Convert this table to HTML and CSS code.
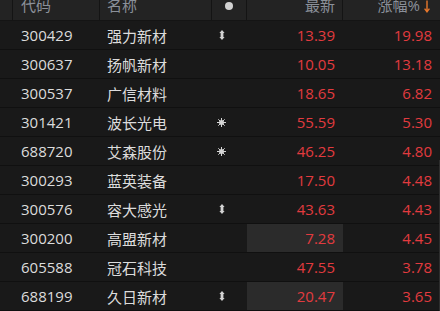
FILE: index.html
```html
<!DOCTYPE html>
<html lang="zh">
<head>
<meta charset="utf-8">
<link rel="stylesheet" href="styles.css">
</head>
<body>
<div class="board">
  <div class="row head">
    <div class="c c0"></div>
    <div class="c c1">代码</div>
    <div class="c c2">名称</div>
    <div class="c c3"><span class="dot"></span></div>
    <div class="c c4">最新</div>
    <div class="c c5">涨幅%<svg class="arr" width="6" height="13" viewBox="0 0 6 13"><path d="M3 0.5V11.5M0.6 8.6L3 11.8L5.4 8.6" fill="none" stroke="#e8782c" stroke-width="1.4"/></svg></div>
  </div>
  <div class="row"><div class="c c0"></div><div class="c c1">300429</div><div class="c c2">强力新材</div><div class="c c3"><svg class="ud" width="6" height="10" viewBox="0 0 6 10"><path d="M3 0L5.6 3H4.4V7H5.6L3 10L0.4 7H1.6V3H0.4Z" fill="#d2d2d2"/></svg></div><div class="c c4 up">13.39</div><div class="c c5 up">19.98</div></div>
  <div class="row"><div class="c c0"></div><div class="c c1">300637</div><div class="c c2">扬帆新材</div><div class="c c3"></div><div class="c c4 up">10.05</div><div class="c c5 up">13.18</div></div>
  <div class="row"><div class="c c0"></div><div class="c c1">300537</div><div class="c c2">广信材料</div><div class="c c3"></div><div class="c c4 up">18.65</div><div class="c c5 up">6.82</div></div>
  <div class="row"><div class="c c0"></div><div class="c c1">301421</div><div class="c c2">波长光电</div><div class="c c3"><svg class="sun" width="9" height="9" viewBox="0 0 9 9"><circle cx="4.5" cy="4.5" r="2.5" fill="#d6d6d6"/><path d="M4.5 0V9M0 4.5H9M1.3 1.3L7.7 7.7M7.7 1.3L1.3 7.7" stroke="#d6d6d6" stroke-width="1"/></svg></div><div class="c c4 up">55.59</div><div class="c c5 up">5.30</div></div>
  <div class="row"><div class="c c0"></div><div class="c c1">688720</div><div class="c c2">艾森股份</div><div class="c c3"><svg class="sun" width="9" height="9" viewBox="0 0 9 9"><circle cx="4.5" cy="4.5" r="2.5" fill="#d6d6d6"/><path d="M4.5 0V9M0 4.5H9M1.3 1.3L7.7 7.7M7.7 1.3L1.3 7.7" stroke="#d6d6d6" stroke-width="1"/></svg></div><div class="c c4 up">46.25</div><div class="c c5 up">4.80</div></div>
  <div class="row"><div class="c c0"></div><div class="c c1">300293</div><div class="c c2">蓝英装备</div><div class="c c3"></div><div class="c c4 up">17.50</div><div class="c c5 up">4.48</div></div>
  <div class="row"><div class="c c0"></div><div class="c c1">300576</div><div class="c c2">容大感光</div><div class="c c3"><svg class="ud" width="6" height="10" viewBox="0 0 6 10"><path d="M3 0L5.6 3H4.4V7H5.6L3 10L0.4 7H1.6V3H0.4Z" fill="#d2d2d2"/></svg></div><div class="c c4 up">43.63</div><div class="c c5 up">4.43</div></div>
  <div class="row"><div class="c c0"></div><div class="c c1">300200</div><div class="c c2">高盟新材</div><div class="c c3"></div><div class="c c4 up hl">7.28</div><div class="c c5 up">4.45</div></div>
  <div class="row"><div class="c c0"></div><div class="c c1">605588</div><div class="c c2">冠石科技</div><div class="c c3"></div><div class="c c4 up">47.55</div><div class="c c5 up">3.78</div></div>
  <div class="row"><div class="c c0"></div><div class="c c1">688199</div><div class="c c2">久日新材</div><div class="c c3"><svg class="ud" width="6" height="10" viewBox="0 0 6 10"><path d="M3 0L5.6 3H4.4V7H5.6L3 10L0.4 7H1.6V3H0.4Z" fill="#d2d2d2"/></svg></div><div class="c c4 up hl">20.47</div><div class="c c5 up">3.65</div></div>
  <div class="thumb"></div>
</div>
</body>
</html>
```
FILE: styles.css
```css
html, body {
  margin: 0;
  padding: 0;
  background: #191919;
  overflow: hidden;
}
.board {
  position: relative;
  width: 440px;
  height: 311px;
  overflow: hidden;
  font-family: "Open Sans", "Noto Sans CJK SC", sans-serif;
  font-size: 15px;
  color: #dcdcdc;
}
.row {
  display: grid;
  grid-template-columns: 13px 87px 112px 35px 96px 97px;
  height: 28px;
  border-bottom: 1px solid #101010;
  background: #191919;
}
.c {
  display: flex;
  align-items: center;
  min-width: 0;
  white-space: nowrap;
}
.c1 { padding-left: 8px; }
.c2 { padding-left: 7px; }
.c3 { justify-content: flex-start; padding-left: 6px; }
.c4 { justify-content: flex-end; padding-right: 8px; }
.c5 { justify-content: flex-end; padding-right: 8px; }
.up { color: #e23b3f; }
.hl { background: #2b2b2b; }
.head {
  height: 20px;
  background: #232323;
  border-bottom: 1px solid #141414;
  color: #8b9099;
}
.head .c {
  align-items: flex-start;
  line-height: 14px;
  margin-top: -2px;
  border-right: 1px solid #141414;
}
.head .c5 { border-right: none; padding-right: 10px; }
.head .c4 { padding-right: 7px; }
.head .c3 { justify-content: center; padding-left: 0; }
.dot {
  display: block;
  width: 8px;
  height: 8px;
  border-radius: 50%;
  background: #d2d2d2;
  margin-top: 4px;
}
.arr { margin-left: 4px; margin-top: 2px; }
.ud { margin-left: 1px; }
.sun { margin-left: -1px; }
.thumb {
  position: absolute;
  right: 0;
  top: 160px;
  width: 1px;
  height: 151px;
  background: #2e2e2e;
}
```
